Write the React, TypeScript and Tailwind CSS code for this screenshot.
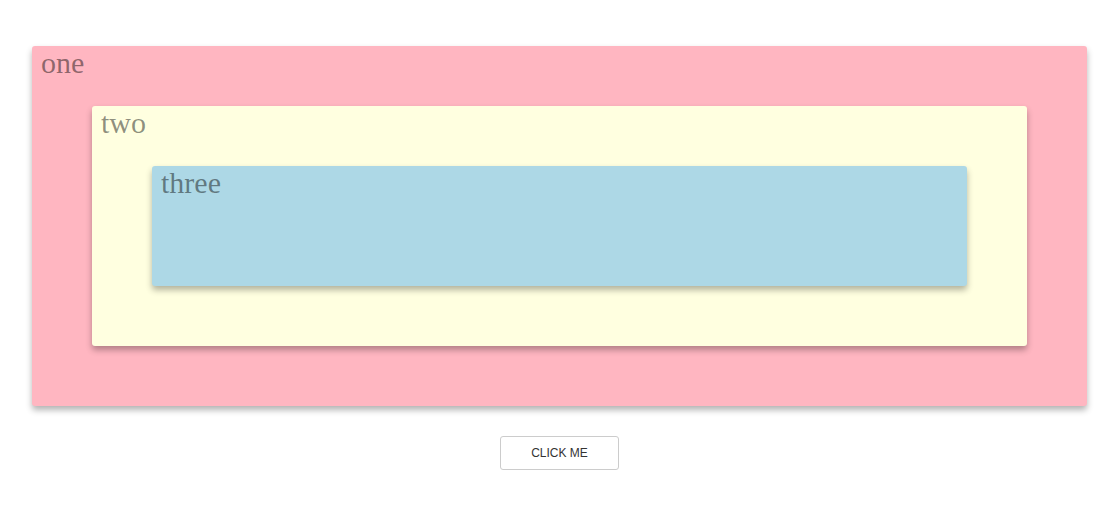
import React from "react";

interface BoxProps {
  label: string;
  bg: string;
  children?: React.ReactNode;
}

const Box: React.FC<BoxProps> = ({ label, bg, children }) => {
  return (
    <div
      className={`${bg} rounded-[3px] px-2 shadow-[0_4px_6px_rgba(0,0,0,0.3)] ${
        children ? "pb-[60px]" : "h-[120px]"
      }`}
    >
      <div className="h-[60px] pl-[1px] text-[30px] leading-[34px] text-black/45 font-['Liberation_Serif',serif]">
        {label}
      </div>
      {children && <div className="mx-[52px]">{children}</div>}
    </div>
  );
};

const App: React.FC = () => {
  return (
    <div className="min-h-[531px] bg-white pt-[46px] pl-8 pr-[33px]">
      <Box label="one" bg="bg-[#ffb6c1]">
        <Box label="two" bg="bg-[#ffffe0]">
          <Box label="three" bg="bg-[#add8e6]" />
        </Box>
      </Box>
      <div className="flex justify-center mt-[30px]">
        <button className="w-[119px] h-[34px] border border-[#cccccc] rounded-[3px] bg-white text-[12px] text-[#333] uppercase font-['Liberation_Sans',Arial,sans-serif]">
          Click me
        </button>
      </div>
    </div>
  );
};

export default App;
